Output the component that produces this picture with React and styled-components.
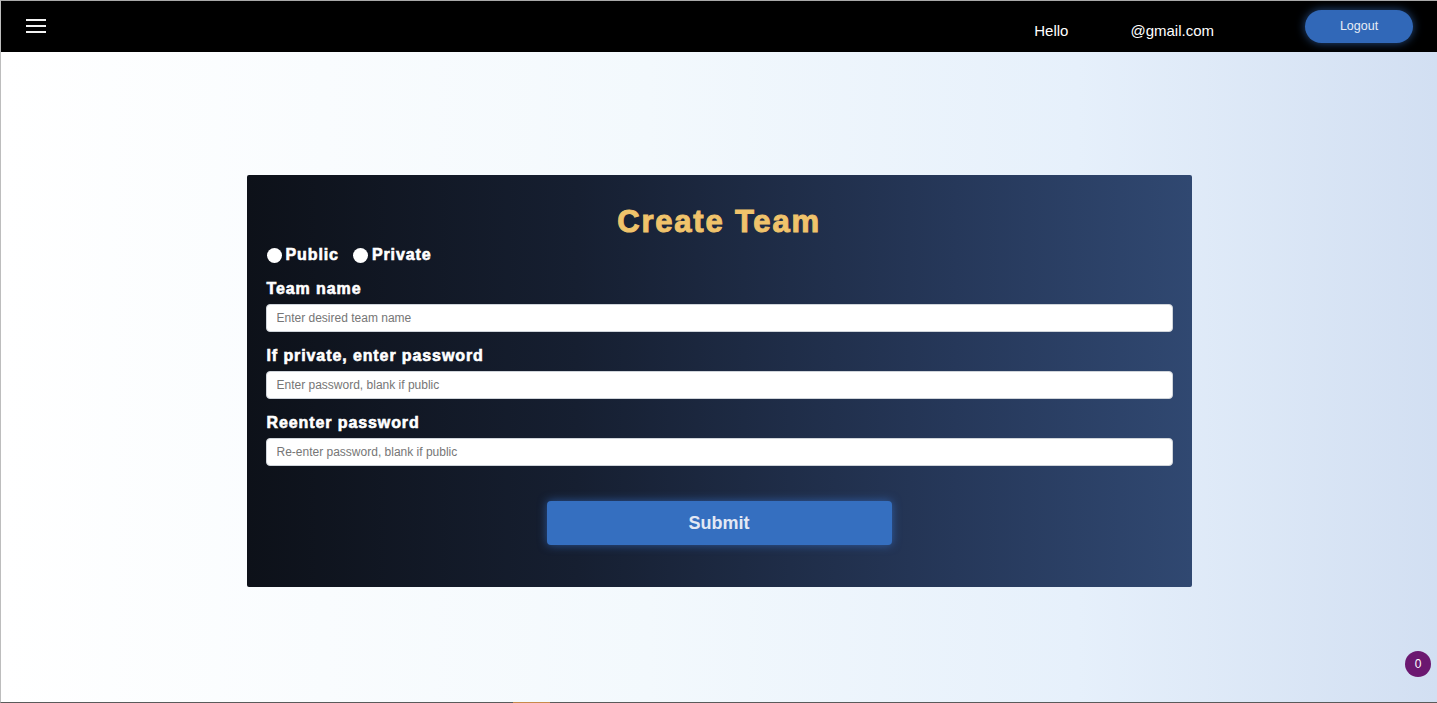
import styled, { createGlobalStyle } from "styled-components";

const GlobalStyle = createGlobalStyle`
  html, body {
    margin: 0;
    padding: 0;
    height: 100%;
  }
  body {
    font-family: "Liberation Sans", Arial, sans-serif;
  }
  * {
    box-sizing: border-box;
  }
`;

const Page = styled.div`
  position: relative;
  min-height: 100vh;
  display: flex;
  flex-direction: column;
  border-top: 1px solid #a9a9a9;
  border-left: 1px solid #bdbdbd;
  border-bottom: 1px solid #5a5a5a;
  background: linear-gradient(to right, #ffffff 0%, #f3f9fd 45%, #e6f0fb 75%, #d2dff2 100%);
`;

const NavBar = styled.nav`
  height: 51px;
  background: #000;
  display: flex;
  align-items: center;
  justify-content: space-between;
  padding: 0 24px 0 25px;
`;

const MenuButton = styled.button`
  background: none;
  border: none;
  padding: 0;
  width: 20px;
  display: flex;
  flex-direction: column;
  gap: 4px;
  cursor: pointer;
  margin-top: -1px;
  & > span {
    display: block;
    height: 2px;
    background: #f2f2f2;
  }
`;

const UserArea = styled.div`
  display: flex;
  align-items: center;
`;

const Greeting = styled.div`
  color: #fff;
  font-size: 15px;
  margin-top: 8px;
  display: flex;
  align-items: center;
`;

const HiddenName = styled.span`
  display: inline-block;
  width: 62px;
`;

const LogoutButton = styled.button`
  margin-left: 91px;
  width: 108px;
  height: 33px;
  border: none;
  border-radius: 17px;
  background: #3168b8;
  color: #e8edf6;
  font-family: "Liberation Sans", Arial, sans-serif;
  font-size: 12.5px;
  padding-bottom: 3px;
  box-shadow: 0 0 10px rgba(70, 140, 240, 0.55);
  cursor: pointer;
`;

const Main = styled.main`
  flex: 1;
  display: flex;
  justify-content: center;
  padding-top: 123px;
`;

const Card = styled.form`
  width: 945px;
  height: 412px;
  border-radius: 2px;
  background: linear-gradient(to right, #0d1119 0%, #161f31 35%, #26385a 75%, #304871 100%);
  padding: 29px 19px 0 19px;
  display: flex;
  flex-direction: column;
`;

const Title = styled.h1`
  margin: 0;
  text-align: center;
  color: #f0c36b;
  font-family: "Arial Black", "Liberation Sans", Arial, sans-serif;
  font-weight: 900;
  font-size: 31px;
  line-height: 36px;
  letter-spacing: 1.8px;
  -webkit-text-stroke: 1px #f0c36b;
`;

const RadioRow = styled.div`
  margin-top: 5px;
  height: 20px;
  display: flex;
  align-items: center;
  gap: 14px;
  padding-left: 1px;
`;

const RadioLabel = styled.label`
  display: flex;
  align-items: center;
  gap: 4px;
  color: #fff;
  font-weight: 700;
  font-size: 16px;
  letter-spacing: 0.9px;
  -webkit-text-stroke: 0.6px #fff;
  cursor: pointer;
`;

const Radio = styled.input.attrs({ type: "radio" })`
  appearance: none;
  width: 15px;
  height: 15px;
  margin: 0;
  border-radius: 50%;
  background: #fff;
  border: none;
`;

const Field = styled.div`
  margin-top: 14px;
  display: flex;
  flex-direction: column;
  gap: 5px;
`;

const FieldLabel = styled.label`
  color: #fff;
  font-weight: 700;
  font-size: 16px;
  line-height: 20px;
  letter-spacing: 0.9px;
  -webkit-text-stroke: 0.6px #fff;
  padding-left: 1px;
`;

const TextInput = styled.input`
  width: 100%;
  height: 28px;
  border: 1px solid #cfd4da;
  border-radius: 4px;
  background: #fff;
  padding: 0 10px;
  font-family: "Liberation Sans", Arial, sans-serif;
  font-size: 12px;
  color: #222;
  outline: none;
  &::placeholder {
    color: #767676;
  }
`;

const SubmitRow = styled.div`
  margin-top: 35px;
  display: flex;
  justify-content: center;
`;

const SubmitButton = styled.button`
  width: 345px;
  height: 44px;
  border: none;
  border-radius: 4px;
  background: #356fc0;
  color: #e3e8f4;
  font-family: "Liberation Sans", Arial, sans-serif;
  font-weight: 700;
  font-size: 18px;
  box-shadow: 0 0 10px rgba(60, 130, 235, 0.55);
  cursor: pointer;
`;

const Badge = styled.div`
  position: fixed;
  right: 6px;
  bottom: 26px;
  width: 26px;
  height: 26px;
  border-radius: 50%;
  background: #6b1870;
  color: #fff;
  font-size: 12px;
  display: flex;
  align-items: center;
  justify-content: center;
`;

const TaskMark = styled.div`
  position: absolute;
  left: 512px;
  bottom: -1px;
  width: 37px;
  height: 1px;
  background: #c98a4a;
`;

const fields = [
  { id: "name", label: "Team name", placeholder: "Enter desired team name", type: "text" },
  { id: "password", label: "If private, enter password", placeholder: "Enter password, blank if public", type: "password" },
  { id: "confirm", label: "Reenter password", placeholder: "Re-enter password, blank if public", type: "password" },
];

export default function App() {
  return (
    <Page>
      <GlobalStyle />
      <NavBar>
        <MenuButton aria-label="menu">
          <span />
          <span />
          <span />
        </MenuButton>
        <UserArea>
          <Greeting>
            Hello
            <HiddenName />
            @gmail.com
          </Greeting>
          <LogoutButton>Logout</LogoutButton>
        </UserArea>
      </NavBar>
      <Main>
        <Card onSubmit={(e) => e.preventDefault()}>
          <Title>Create Team</Title>
          <RadioRow>
            <RadioLabel>
              <Radio name="visibility" value="public" />
              Public
            </RadioLabel>
            <RadioLabel>
              <Radio name="visibility" value="private" />
              Private
            </RadioLabel>
          </RadioRow>
          {fields.map((f) => (
            <Field key={f.id}>
              <FieldLabel htmlFor={f.id}>{f.label}</FieldLabel>
              <TextInput id={f.id} type={f.type} placeholder={f.placeholder} />
            </Field>
          ))}
          <SubmitRow>
            <SubmitButton type="submit">Submit</SubmitButton>
          </SubmitRow>
        </Card>
      </Main>
      <Badge>0</Badge>
      <TaskMark />
    </Page>
  );
}
